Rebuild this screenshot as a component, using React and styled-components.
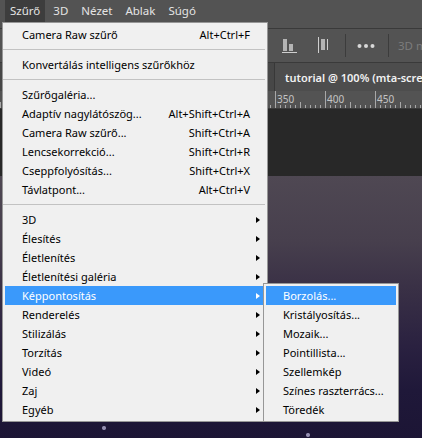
import React from 'react'
import styled, { createGlobalStyle } from 'styled-components'

const uiFont = '"Noto Sans", "Open Sans", "DejaVu Sans", sans-serif'

const GlobalStyle = createGlobalStyle`
  html, body {
    margin: 0;
    padding: 0;
    background: #1c1535;
  }
  body {
    font-family: ${uiFont};
  }
`

const topMenus = ['Szűrő', '3D', 'Nézet', 'Ablak', 'Súgó']

const filterGroups = [
  [{ label: 'Camera Raw szűrő', shortcut: 'Alt+Ctrl+F' }],
  [{ label: 'Konvertálás intelligens szűrőkhöz' }],
  [
    { label: 'Szűrőgaléria...' },
    { label: 'Adaptív nagylátószög...', shortcut: 'Alt+Shift+Ctrl+A' },
    { label: 'Camera Raw szűrő...', shortcut: 'Shift+Ctrl+A' },
    { label: 'Lencsekorrekció...', shortcut: 'Shift+Ctrl+R' },
    { label: 'Cseppfolyósítás...', shortcut: 'Shift+Ctrl+X' },
    { label: 'Távlatpont...', shortcut: 'Alt+Ctrl+V' },
  ],
  [
    { label: '3D', sub: true },
    { label: 'Élesítés', sub: true },
    { label: 'Életlenítés', sub: true },
    { label: 'Életlenítési galéria', sub: true },
    { label: 'Képpontosítás', sub: true, open: true },
    { label: 'Renderelés', sub: true },
    { label: 'Stilizálás', sub: true },
    { label: 'Torzítás', sub: true },
    { label: 'Videó', sub: true },
    { label: 'Zaj', sub: true },
    { label: 'Egyéb', sub: true },
  ],
]

const pixelateItems = [
  'Borzolás...',
  'Kristályosítás...',
  'Mozaik...',
  'Pointillista...',
  'Szellemkép',
  'Színes raszterrács...',
  'Töredék',
]

export default function App() {
  return (
    <>
      <GlobalStyle />
      <Page>
        <MenuBar>
          {topMenus.map((name, i) => (
            <MenuTitle key={name} active={i === 0}>{name}</MenuTitle>
          ))}
        </MenuBar>

        <OptionsBar>
          <ToolIcon width="16" height="16" viewBox="0 0 16 16">
            <rect x="1" y="1" width="4" height="12" fill="#b4b4b4" />
            <rect x="7" y="6" width="4" height="7" fill="#b4b4b4" />
            <rect x="0" y="14" width="15" height="1" fill="#cfcfcf" />
          </ToolIcon>
          <ToolIcon width="12" height="17" viewBox="0 0 12 17" gap={20}>
            <rect x="0" y="0" width="1" height="16" fill="#cfcfcf" />
            <rect x="3" y="2" width="4" height="11" fill="#b4b4b4" />
            <rect x="9" y="2" width="1" height="11" fill="#cfcfcf" />
          </ToolIcon>
          <ToolSep gap={15} />
          <ToolIcon width="18" height="6" viewBox="0 0 18 6" gap={11}>
            <circle cx="2.5" cy="3" r="2" fill="#d8d8d8" />
            <circle cx="9" cy="3" r="2" fill="#d8d8d8" />
            <circle cx="15.5" cy="3" r="2" fill="#d8d8d8" />
          </ToolIcon>
          <ToolSep gap={13} />
          <DimLabel>3D mód:</DimLabel>
        </OptionsBar>

        <TabBar>
          <DocTab>tutorial @ 100% (mta-screenshot, RGB/8)</DocTab>
        </TabBar>

        <Ruler>
          <svg width="422" height="17" viewBox="0 0 422 17">
            {Array.from({ length: 90 }, (_, i) => {
              const x = 275 + (i - 60) * 5 + 0.5
              const step = ((i - 60) % 10 + 10) % 10
              const h = step === 0 ? 17 : step === 5 ? 6 : 3
              return <line key={i} x1={x} x2={x} y1={17 - h} y2={17} stroke="#a8a8a8" strokeWidth="1" />
            })}
            {[350, 400, 450].map((n, i) => (
              <text key={n} x={277 + i * 50} y={12} fontSize="10" fill="#c4c4c4" fontFamily={uiFont}>{n}</text>
            ))}
          </svg>
        </Ruler>

        <Pasteboard>
          <DocImage />
        </Pasteboard>

        <Dropdown>
          {filterGroups.map((group, gi) => (
            <React.Fragment key={gi}>
              {gi > 0 && <Separator />}
              {group.map((item) => (
                <Item key={item.label} active={item.open}>
                  <Label>{item.label}</Label>
                  {item.shortcut && <Shortcut>{item.shortcut}</Shortcut>}
                  <ArrowCell>{item.sub && <Arrow active={item.open} />}</ArrowCell>
                  {item.open && (
                    <Submenu>
                      {pixelateItems.map((label, si) => (
                        <Item key={label} active={si === 0}>
                          <Label>{label}</Label>
                          <ArrowCell />
                        </Item>
                      ))}
                    </Submenu>
                  )}
                </Item>
              ))}
            </React.Fragment>
          ))}
        </Dropdown>
      </Page>
    </>
  )
}

const Page = styled.div`
  position: relative;
  width: 422px;
  height: 438px;
  overflow: hidden;
  display: flex;
  flex-direction: column;
  background: #282828;
  font-family: ${uiFont};
`
// felső menüsor
const MenuBar = styled.div`
  height: 28px;
  flex-shrink: 0;
  display: flex;
  align-items: flex-start;
  gap: 3px;
  padding-left: 5px;
  background: #535353;
  border-bottom: 1px solid #3a3a3a;
`

const MenuTitle = styled.div`
  height: 22px;
  line-height: 22px;
  padding: 0 5px;
  font-size: 11.5px;
  color: #e4e4e4;
  background: ${(p) => (p.active ? '#3d3d3d' : 'transparent')};
`
// beállítások sáv
const OptionsBar = styled.div`
  height: 33px;
  flex-shrink: 0;
  display: flex;
  align-items: center;
  padding-left: 282px;
  background: #535353;
  border-bottom: 1px solid #3a3a3a;
  overflow: hidden;
`

const ToolIcon = styled.svg`
  flex-shrink: 0;
  margin-left: ${(p) => p.gap || 0}px;
`

const ToolSep = styled.div`
  width: 1px;
  height: 23px;
  flex-shrink: 0;
  margin-left: ${(p) => p.gap || 0}px;
  background: #3c3c3c;
`

const DimLabel = styled.div`
  margin-left: 9px;
  font-size: 11.5px;
  color: #7c7c7c;
  white-space: nowrap;
`
// dokumentum fül
const TabBar = styled.div`
  height: 28px;
  flex-shrink: 0;
  display: flex;
  padding-left: 274px;
  background: #474747;
  overflow: hidden;
`

const DocTab = styled.div`
  display: flex;
  align-items: center;
  padding-left: 10px;
  border-left: 1px solid #383838;
  background: #4d4d4d;
  font-size: 11px;
  font-weight: 600;
  color: #f2f2f2;
  white-space: nowrap;
`

const Ruler = styled.div`
  height: 17px;
  flex-shrink: 0;
  background: #535353;
  border-bottom: 1px solid #3a3a3a;
  overflow: hidden;

  svg {
    display: block;
  }
`

const Pasteboard = styled.div`
  flex: 1;
  display: flex;
  flex-direction: column;
  padding-top: 67px;
  background: #282828;
`

const DocImage = styled.div`
  flex: 1;
  background:
    radial-gradient(circle at 104px 252px, rgba(200, 195, 230, 0.7) 0 1.5px, transparent 2.5px),
    radial-gradient(circle at 308px 259px, rgba(200, 195, 230, 0.7) 0 1.5px, transparent 2.5px),
    linear-gradient(180deg, #4f4853 0%, #473f4d 25%, #3a3146 42%, #2a2140 65%, #1f1839 82%, #1c1535 100%);
`
// Szűrő legördülő menü
const Dropdown = styled.div`
  position: absolute;
  top: 22px;
  left: 2px;
  z-index: 2;
  width: 266px;
  box-sizing: border-box;
  padding: 2px;
  background: #f0f0f0;
  border: 1px solid #979797;
`

const Item = styled.div`
  position: relative;
  height: 19px;
  display: flex;
  align-items: center;
  padding-left: 17px;
  font-size: 11px;
  color: ${(p) => (p.active ? '#ffffff' : '#000000')};
  background: ${(p) => (p.active ? '#3a99fb' : 'transparent')};
  white-space: nowrap;
`

const Label = styled.span`
  flex: 1;
`

const Shortcut = styled.span`
  margin-left: 12px;
`

const ArrowCell = styled.span`
  width: 15px;
  height: 19px;
  flex-shrink: 0;
  display: flex;
  align-items: center;
  padding-left: 6px;
  box-sizing: border-box;
`

const Arrow = styled.span`
  width: 0;
  height: 0;
  border-left: 4px solid ${(p) => (p.active ? '#ffffff' : '#000000')};
  border-top: 3.5px solid transparent;
  border-bottom: 3.5px solid transparent;
`

const Separator = styled.div`
  height: 11px;
  display: flex;
  align-items: center;
  margin-left: -2px;

  &::before {
    content: '';
    flex: 1;
    height: 1px;
    background: #c2c2c2;
  }
`

const Submenu = styled.div`
  position: absolute;
  top: -3px;
  left: calc(100% - 2px);
  width: 136px;
  box-sizing: border-box;
  padding: 2px;
  background: #f0f0f0;
  border: 1px solid #979797;
`
